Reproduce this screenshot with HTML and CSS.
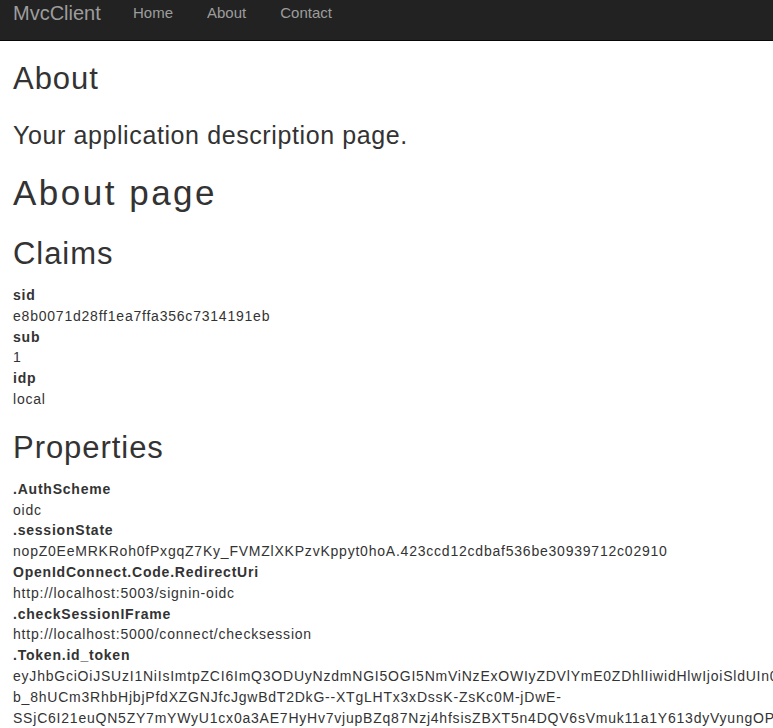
FILE: index.html
```html
<!DOCTYPE html>
<html lang="en">
<head>
<meta charset="utf-8">
<title>About - MvcClient</title>
<link rel="stylesheet" href="styles.css">
</head>
<body>
<nav class="navbar">
  <a class="brand" href="#">MvcClient</a>
  <ul class="nav">
    <li><a href="#">Home</a></li>
    <li><a href="#">About</a></li>
    <li><a href="#">Contact</a></li>
  </ul>
</nav>
<main class="container">
  <h2 class="title">About</h2>
  <p class="lead">Your application description page.</p>
  <h1 class="page-title">About page</h1>
  <h2 class="section claims">Claims</h2>
  <dl class="list">
    <dt>sid</dt>
    <dd>e8b0071d28ff1ea7ffa356c7314191eb</dd>
    <dt>sub</dt>
    <dd>1</dd>
    <dt>idp</dt>
    <dd>local</dd>
  </dl>
  <h2 class="section props">Properties</h2>
  <dl class="list">
    <dt>.AuthScheme</dt>
    <dd>oidc</dd>
    <dt>.sessionState</dt>
    <dd>nopZ0EeMRKRoh0fPxgqZ7Ky_FVMZlXKPzvKppyt0hoA.423ccd12cdbaf536be30939712c02910</dd>
    <dt>OpenIdConnect.Code.RedirectUri</dt>
    <dd>http://localhost:5003/signin-oidc</dd>
    <dt>.checkSessionIFrame</dt>
    <dd>http://localhost:5000/connect/checksession</dd>
    <dt>.Token.id_token</dt>
    <dd>eyJhbGciOiJSUzI1NiIsImtpZCI6ImQ3ODUyNzdmNGI5OGI5NmViNzExOWIyZDVlYmE0ZDhlIiwidHlwIjoiSldUIn0</dd>
    <dd>b_8hUCm3RhbHjbjPfdXZGNJfcJgwBdT2DkG--XTgLHTx3xDssK-ZsKc0M-jDwE-</dd>
    <dd>SSjC6I21euQN5ZY7mYWyU1cx0a3AE7HyHv7vjupBZq87Nzj4hfsisZBXT5n4DQV6sVmuk11a1Y613dyVyungOPX</dd>
  </dl>
</main>
</body>
</html>
```

FILE: styles.css
```css
html, body {
  margin: 0;
  padding: 0;
}
body {
  font-family: "Liberation Sans", Arial, Helvetica, sans-serif;
  font-size: 14px;
  color: #333;
  background: #fff;
  overflow: hidden;
}
a { text-decoration: none; }

.navbar {
  display: flex;
  align-items: flex-start;
  height: 40px;
  background: #222;
  border-bottom: 1px solid #080808;
  padding-left: 13px;
}
.brand {
  width: 120px;
  font-size: 20px;
  line-height: 24px;
  padding-top: 1px;
  color: #9d9d9d;
}
.nav {
  display: flex;
  gap: 34px;
  list-style: none;
  margin: 0;
  padding: 3px 0 0;
}
.nav a {
  display: block;
  font-size: 15px;
  line-height: 20px;
  color: #9d9d9d;
}

.container {
  padding: 0 13px;
}
.title, .section {
  font-size: 31px;
  line-height: 34px;
  font-weight: 500;
  letter-spacing: 0.95px;
  margin: 0;
}
.title { margin-top: 21px; }
.lead {
  font-size: 25px;
  line-height: 30px;
  font-weight: 300;
  letter-spacing: 0.6px;
  margin: 24px 0 0;
}
.page-title {
  font-size: 35px;
  line-height: 38px;
  font-weight: 500;
  letter-spacing: 2.5px;
  margin: 24px 0 0;
}
.claims { margin-top: 25px; margin-bottom: 14px; }
.props { margin-top: 21px; margin-bottom: 14px; }
.list {
  margin: 0;
  line-height: 20.8px;
  letter-spacing: 0.78px;
}
.list dt { font-weight: 700; }
.list dd {
  margin: 0;
  white-space: nowrap;
}
```
